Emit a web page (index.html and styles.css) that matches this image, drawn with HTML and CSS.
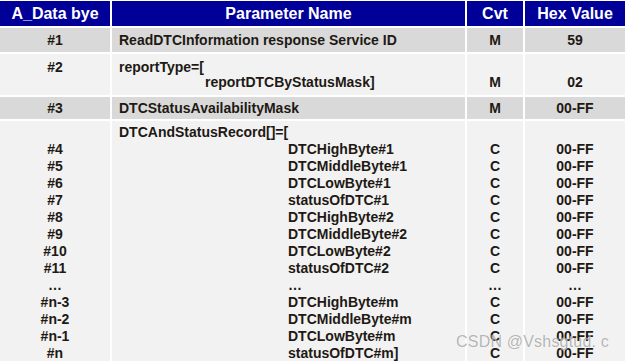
FILE: index.html
```html
<!DOCTYPE html>
<html>
<head>
<meta charset="utf-8">
<link rel="stylesheet" href="styles.css">
</head>
<body>
<div class="sheet">
  <div class="grid">
    <div class="hd">A_Data bye</div>
    <div class="hd">Parameter Name</div>
    <div class="hd">Cvt</div>
    <div class="hd">Hex Value</div>

    <div class="c dark r1 ctr">#1</div>
    <div class="c dark r1 left">ReadDTCInformation response Service ID</div>
    <div class="c dark r1 ctr">M</div>
    <div class="c dark r1 ctr">59</div>

    <div class="c light r2 ctr"><div class="ln">#2</div></div>
    <div class="c light r2 left"><div class="ln">reportType=[</div><div class="ln ind1">reportDTCByStatusMask]</div></div>
    <div class="c light r2 ctr"><div class="ln">&nbsp;</div><div class="ln">M</div></div>
    <div class="c light r2 ctr"><div class="ln">&nbsp;</div><div class="ln">02</div></div>

    <div class="c dark r3 ctr">#3</div>
    <div class="c dark r3 left">DTCStatusAvailabilityMask</div>
    <div class="c dark r3 ctr">M</div>
    <div class="c dark r3 ctr">00-FF</div>

    <div class="c light r4 ctr list">
      <div>&nbsp;</div><div>#4</div><div>#5</div><div>#6</div><div>#7</div><div>#8</div><div>#9</div><div>#10</div><div>#11</div><div>…</div><div>#n-3</div><div>#n-2</div><div>#n-1</div><div>#n</div>
    </div>
    <div class="c light r4 left list">
      <div>DTCAndStatusRecord[]=[</div>
      <div class="ind2">DTCHighByte#1</div>
      <div class="ind2">DTCMiddleByte#1</div>
      <div class="ind2">DTCLowByte#1</div>
      <div class="ind2">statusOfDTC#1</div>
      <div class="ind2">DTCHighByte#2</div>
      <div class="ind2">DTCMiddleByte#2</div>
      <div class="ind2">DTCLowByte#2</div>
      <div class="ind2">statusOfDTC#2</div>
      <div class="ind2">…</div>
      <div class="ind2">DTCHighByte#m</div>
      <div class="ind2">DTCMiddleByte#m</div>
      <div class="ind2">DTCLowByte#m</div>
      <div class="ind2">statusOfDTC#m]</div>
    </div>
    <div class="c light r4 ctr list">
      <div>&nbsp;</div><div>C</div><div>C</div><div>C</div><div>C</div><div>C</div><div>C</div><div>C</div><div>C</div><div>…</div><div>C</div><div>C</div><div>C</div><div>C</div>
    </div>
    <div class="c light r4 ctr list">
      <div>&nbsp;</div><div>00-FF</div><div>00-FF</div><div>00-FF</div><div>00-FF</div><div>00-FF</div><div>00-FF</div><div>00-FF</div><div>00-FF</div><div>…</div><div>00-FF</div><div>00-FF</div><div>00-FF</div><div>00-FF</div>
    </div>
  </div>
  <div class="watermark">CSDN @Vshsgtud. c</div>
</div>
</body>
</html>
```

FILE: styles.css
```css
html, body {
  margin: 0;
  padding: 0;
  background: #ffffff;
  overflow: hidden;
}

.sheet {
  position: relative;
  width: 625px;
  height: 361px;
  overflow: hidden;
  padding-top: 1px;
  box-sizing: border-box;
  font-family: "Liberation Sans", Arial, sans-serif;
  font-weight: bold;
}

.grid {
  display: grid;
  grid-template-columns: 110px 353px 56px 100px;
  column-gap: 2px;
  row-gap: 2px;
}

.hd {
  background: #000099;
  color: #ffffff;
  font-size: 16px;
  height: 25px;
  line-height: 26px;
  text-align: center;
}

.c {
  color: #1e1914;
  font-size: 14px;
}

.dark { background: #d9d9d9; }
.light { background: #f2f2f2; }

.ctr { text-align: center; }
.left { text-align: left; padding-left: 7px; }

.r1 { height: 24px; line-height: 24px; }
.r3 { height: 22px; line-height: 22px; }

.r2 {
  height: 41px;
  box-sizing: border-box;
  padding-top: 6px;
}
.r2 .ln { line-height: 15px; }

.r4 {
  height: 260px;
  box-sizing: border-box;
  padding-top: 3px;
}
.list > div { line-height: 17px; }

.ind1 { padding-left: 86px; }
.ind2 { padding-left: 169px; }

.watermark {
  position: absolute;
  left: 456px;
  top: 333px;
  font-family: "Liberation Sans", Arial, sans-serif;
  font-weight: normal;
  font-size: 16px;
  color: rgba(120, 120, 120, 0.55);
  text-shadow: 0 0 1px rgba(255, 255, 255, 0.9);
  letter-spacing: 0.2px;
}
```
